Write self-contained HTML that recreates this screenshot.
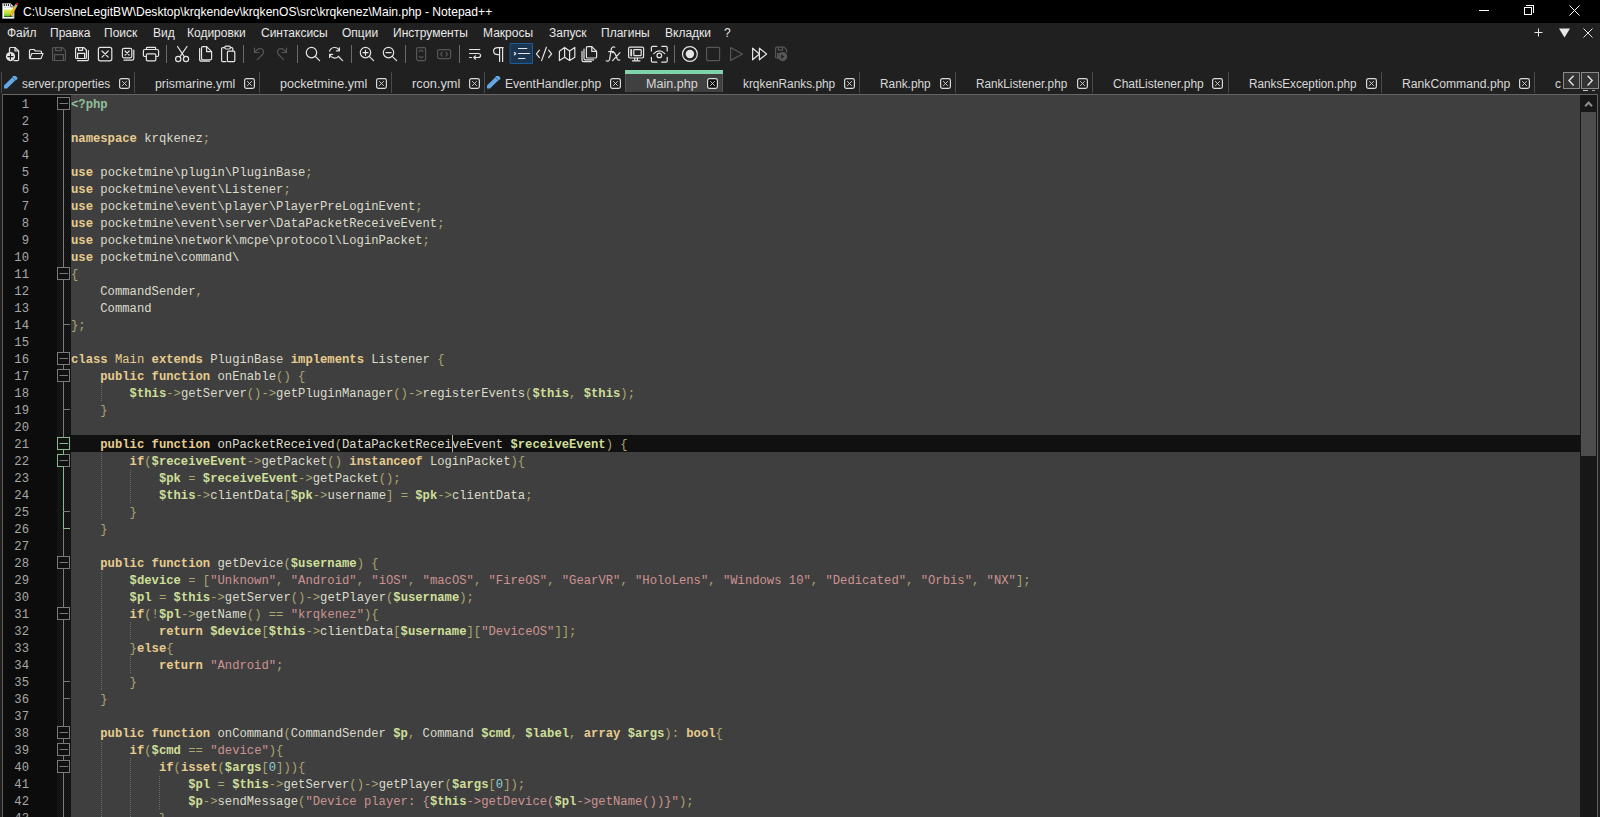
<!DOCTYPE html>
<html><head><meta charset="utf-8">
<style>
*{box-sizing:border-box}
html,body{margin:0;padding:0}
body{width:1600px;height:817px;overflow:hidden;background:#202020;position:relative;font-family:"Liberation Sans",sans-serif;color:#e0e0e0}
.abs{position:absolute}
#title{left:0;top:0;width:1600px;height:23px;background:#000}
#title .ttl{position:absolute;left:23px;top:5px;font-size:12.1px;color:#fff;white-space:pre;line-height:15px}
#menu{left:0;top:23px;width:1600px;height:19px;background:#202020}
#menu span{position:absolute;top:3px;font-size:12px;line-height:15px;color:#e8e8e8;white-space:pre}
#tool{left:0;top:42px;width:1600px;height:24px}
#tabs{left:0;top:66px;width:1600px;height:28px}
.tab{position:absolute;top:0;height:28px}
.tab .nm{position:absolute;top:9px;font-size:11.7px;line-height:15px;color:#d8d8d8;white-space:pre}
.sep{position:absolute;top:6px;width:1px;height:21px;background:#4a4a4a}
.cb{position:absolute;top:12px;width:11px;height:11px;border:1px solid #d0d0d0;border-radius:2px}
#ed{left:0;top:94px;width:1600px;height:723px;background:#1e1e1e}
#edb{position:absolute;left:2px;top:0;width:1596px;height:723px;border-top:1px solid #646464;border-left:1px solid #5e5e5e;border-right:1px solid #5e5e5e}
#lnm{position:absolute;left:3px;top:1px;width:54px;height:722px;background:#0c0c0c}
#fold{position:absolute;left:57px;top:1px;width:14px;height:722px;background:#151515}
#code{position:absolute;left:71px;top:1px;width:1509px;height:722px;background:#3f3f3f;overflow:hidden}
#code div{height:17px;line-height:17px;padding-top:2px;white-space:pre;font-family:"Liberation Mono",monospace;font-size:12.21px;color:#dcdccc;padding-left:0}
#code div.cur{background:#101010}
.k{color:#e6cc8e;font-weight:bold}
.m{color:#e6cc8e}
.v{color:#cedf99;font-weight:bold}
.o{color:#aca670}
.s{color:#cc9393}
.n{color:#8cd0d3}
.tg{color:#8fbf9a;font-weight:bold}
#nums div{position:absolute;left:-2px;margin-top:2px;width:28px;text-align:right;height:17px;line-height:17px;font-family:"Liberation Mono",monospace;font-size:12.22px;color:#a8a8a8}
#sb{position:absolute;left:1580px;top:1px;width:17px;height:722px;background:#171717}
#thumb{position:absolute;left:1px;top:17px;width:15px;height:344px;background:#4d4d4d}
#guides{position:absolute;left:0;top:0;width:0;height:0}
#guides i{position:absolute;width:1px;background-image:repeating-linear-gradient(to bottom,#5c7272 0 1px,transparent 1px 2px)}
#caret{position:absolute;left:381px;top:340px;width:1px;height:17px;background:#a8c4b4}
</style></head><body>

<div id="title" class="abs">
<svg class="abs" style="left:0;top:0" width="20" height="22" viewBox="0 0 20 22">
<defs><linearGradient id="ig" x1="0" y1="0" x2="0" y2="1"><stop offset="0" stop-color="#e8ec50"/><stop offset="0.5" stop-color="#b8e040"/><stop offset="1" stop-color="#50c020"/></linearGradient></defs>
<path d="M2.5 3.5 H10.5 L14 7 V18.5 H2.5 Z" fill="#fafafa" stroke="#9a9a9a"/>
<path d="M10.5 3.5 V7 H14" fill="#c0c0c0" stroke="#808080"/>
<rect x="4" y="9.6" width="8.6" height="7" fill="url(#ig)"/>
<rect x="4" y="16" width="8.6" height="0.8" fill="#105010"/>
<path d="M4 7.2 H10" stroke="#b8c8d8" stroke-width="0.8"/>
<path d="M4.3 4 V6 M6.4 4 V6 M8.5 4 V6" stroke="#303030" stroke-width="1.1"/>
<path d="M10.6 15.6 L15.6 6.4" stroke="#e8a000" stroke-width="2.6"/>
<path d="M10.8 15 L15.4 6.8" stroke="#ffd040" stroke-width="0.9"/>
<path d="M15.4 6.6 L16.6 4.6" stroke="#a8c0d8" stroke-width="2.4"/>
<path d="M16.4 4.8 L17.4 3" stroke="#d01818" stroke-width="2.4"/>
<path d="M10.6 15.6 L10.1 16.6" stroke="#503000" stroke-width="1.2"/>
</svg>
<div class="ttl">C:\Users\neLegitBW\Desktop\krqkendev\krqkenOS\src\krqkenez\Main.php - Notepad++</div>
<div class="abs" style="left:1479px;top:10px;width:10px;height:1px;background:#fff"></div>
<div class="abs" style="left:1526px;top:5px;width:8px;height:8px;border-top:1px solid #fff;border-right:1px solid #fff"></div>
<div class="abs" style="left:1524px;top:7px;width:8px;height:8px;border:1px solid #fff"></div>
<svg class="abs" style="left:1569px;top:5px" width="11" height="11"><path d="M0.5 0.5L10.5 10.5M10.5 0.5L0.5 10.5" stroke="#fff" stroke-width="1"/></svg>
</div>
<div id="menu" class="abs">
<span style="left:7px">Файл</span>
<span style="left:50px">Правка</span>
<span style="left:104px">Поиск</span>
<span style="left:153px">Вид</span>
<span style="left:187px">Кодировки</span>
<span style="left:261px">Синтаксисы</span>
<span style="left:342px">Опции</span>
<span style="left:393px">Инструменты</span>
<span style="left:483px">Макросы</span>
<span style="left:549px">Запуск</span>
<span style="left:601px">Плагины</span>
<span style="left:665px">Вкладки</span>
<span style="left:724px">?</span>
<svg class="abs" style="left:1534px;top:5px" width="9" height="9"><path d="M4.5 0.5V8.5M0.5 4.5H8.5" stroke="#e8e8e8"/></svg>
<svg class="abs" style="left:1559px;top:5px" width="11" height="10"><path d="M0 0.5H11L5.5 9.5Z" fill="#e8e8e8"/></svg>
<svg class="abs" style="left:1583px;top:5px" width="10" height="10"><path d="M0.5 0.5L9.5 9.5M9.5 0.5L0.5 9.5" stroke="#e8e8e8"/></svg>
</div>
<div id="tool" class="abs">
<svg class="abs" style="left:0;top:0" width="1600" height="24" viewBox="0 42 1600 24">
<g fill="none" stroke="#e4e4e4" stroke-width="1.2" stroke-linejoin="round" stroke-linecap="round">
<!-- new -->
<path d="M9.5 52 V48.5 Q9.5 47.5 10.5 47.5 H15 L18.6 51 V59.5 Q18.6 60.6 17.5 60.6 H14"/>
<path d="M15 47.5 V51 H18.6"/>
<circle cx="10.5" cy="56.6" r="4.6" fill="#e4e4e4" stroke="none"/>
<path d="M10.5 54 V59.2 M7.9 56.6 H13.1" stroke="#202020" stroke-width="1.1"/>
<!-- open -->
<path d="M29.5 58 V50.5 Q29.5 49.5 30.5 49.5 H34 L35.5 51 H40.5 Q41.5 51 41.5 52 V53"/>
<path d="M29.8 58.6 L31.8 53.5 H43 L41 58.6 Z"/>
<!-- save disabled -->
<g stroke="#565656">
<path d="M52.6 48.5 Q52.6 47.6 53.5 47.6 H62.5 L65.4 50.5 V59.6 Q65.4 60.5 64.5 60.5 H53.5 Q52.6 60.5 52.6 59.6 Z"/>
<path d="M55.6 47.6 V50.6 H61.4 V47.6"/>
<path d="M54.6 60.5 V54.6 H63.4 V60.5"/>
</g>
<!-- save all -->
<path d="M75.6 48.5 Q75.6 47.6 76.5 47.6 H84 L86.4 50 V57.6 Q86.4 58.5 85.5 58.5 H76.5 Q75.6 58.5 75.6 57.6 Z"/>
<path d="M78.5 47.6 V50.3 H82.6 V47.6"/>
<path d="M77.6 58.5 V53.4 H84.6 V58.5"/>
<path d="M88.4 50.5 V59.5 Q88.4 60.7 87.2 60.7 H77.5"/>
<!-- close -->
<rect x="98.4" y="47.4" width="13.4" height="13.4" rx="2"/>
<path d="M102 51L108.2 57.2M108.2 51L102 57.2"/>
<!-- close all -->
<rect x="122.4" y="48.4" width="9.4" height="9.4" rx="1.5"/>
<path d="M125 51L129.2 55.2M129.2 51L125 55.2"/>
<path d="M133.8 50 V58.5 Q133.8 60.2 132 60.2 H124"/>
<!-- print -->
<path d="M146.5 49.5 V48 Q146.5 47.4 147.2 47.4 H155 Q155.6 47.4 155.6 48 V49.5"/>
<path d="M146 56.5 H144.6 Q143.4 56.5 143.4 55.3 V51 Q143.4 49.5 145 49.5 H157 Q158.6 49.5 158.6 51 V55.3 Q158.6 56.5 157.4 56.5 H156"/>
<rect x="146.4" y="53.8" width="9.4" height="7" rx="1"/>
<!-- cut -->
<circle cx="178.2" cy="59" r="2.6"/>
<circle cx="186" cy="59" r="2.6"/>
<path d="M177.5 46.5 L184.5 56.8 M187 46.5 L179.8 56.8"/>
<!-- copy -->
<path d="M201.5 58.4 V48 Q201.5 46.6 203 46.6 H206.6 L211.6 51.6 V58.4 Q211.6 59.8 210.2 59.8 H203 Q201.5 59.8 201.5 58.4 Z"/>
<path d="M206.6 46.8 V51.6 H211.4"/>
<path d="M199.6 48.6 V59.2 Q199.6 61.2 201.6 61.2 H209.4"/>
<!-- paste -->
<path d="M224.5 47.6 H222.8 Q221.6 47.6 221.6 48.8 V60.6 Q221.6 61.6 222.6 61.6 H226"/>
<path d="M230.4 47.6 H231.8 Q232.8 47.6 232.8 48.6 V50.6"/>
<rect x="224.8" y="46.2" width="5.6" height="2.8" rx="1.2"/>
<rect x="227.4" y="51.2" width="7.4" height="10.4" rx="1"/>
<!-- undo/redo disabled -->
<g stroke="#565656">
<path d="M254.5 48 V52.5 H259"/>
<path d="M254.8 52.2 Q258 47.5 261.5 48.8 Q265 51 262.5 54.5 L257.4 59.6"/>
<path d="M286.5 48 V52.5 H282"/>
<path d="M286.2 52.2 Q283 47.5 279.5 48.8 Q276 51 278.5 54.5 L283.6 59.6"/>
</g>
<!-- find -->
<circle cx="311.5" cy="52.6" r="5.2"/>
<path d="M315.5 56.6 L319.6 60.7"/>
<!-- replace -->
<path d="M339.2 50.3 A5.2 5.2 0 0 0 329.6 51.2"/>
<path d="M329.8 54.8 A5.2 5.2 0 0 0 338.5 56.3"/>
<path d="M339.4 47.8 V50.8 H336.4" />
<path d="M329.6 57.4 V54.4 H332.6" />
<path d="M338.5 56.5 L342.6 60.7"/>
<!-- zoom in -->
<circle cx="365.5" cy="52.6" r="5.2"/>
<path d="M369.5 56.6 L373.6 60.7 M365.5 50 V55.2 M362.9 52.6 H368.1"/>
<!-- zoom out -->
<circle cx="388.5" cy="52.6" r="5.2"/>
<path d="M392.5 56.6 L396.6 60.7 M385.9 52.6 H391.1"/>
<!-- sync disabled -->
<g stroke="#565656">
<rect x="416.6" y="47.6" width="9" height="13" rx="1.5"/>
<path d="M419.2 51.6 L421.1 50 L423 51.6 M419.2 56.4 L421.1 58 L423 56.4"/>
<rect x="437.6" y="49.6" width="13" height="9" rx="1.5"/>
<path d="M442.2 52 L440.7 54.1 L442.2 56.2 M446 52 L447.5 54.1 L446 56.2"/>
</g>
<!-- wrap -->
<path d="M469.5 49.5 H479.8 M469.5 53.5 H478 Q480.6 53.5 480.6 55.5 Q480.6 57.5 478 57.5 H474.5 M469.5 57.5 H471.5"/>
<path d="M475.5 55.8 L473.8 57.5 L475.5 59.2"/>
<!-- pilcrow -->
<path d="M499.6 47.6 V61.5 M502.6 47.6 V61.5 M503.2 47.6 H498 Q493.6 47.6 493.6 51 Q493.6 54.6 498 54.6 H499.6"/>
<!-- indent guide active -->
<rect x="510.5" y="43.5" width="22" height="20" fill="#1b3550" stroke="#1d5c96" stroke-width="1"/>
<path d="M514.4 52.5 L515.8 53.6 L514.4 54.8"/>
<path d="M518.5 48.5 H526.8 M518.5 53.5 H529.6 M518.5 58.5 H524.8"/>
<!-- </> -->
<path d="M539.4 50.2 L536.4 53.8 L539.4 57.6 M548.6 50.2 L551.6 53.8 L548.6 57.6 M546.4 47.2 L541.6 60.6"/>
<!-- map -->
<path d="M559.4 51.2 L564.6 47.4 L569.6 51 L574.8 47.4 V57.2 L569.6 60.6 L564.6 57.2 L559.4 60.6 Z M564.6 47.4 V57.2 M569.6 51 V60.6"/>
<!-- doc list -->
<path d="M586.4 57 V47.6 Q586.4 46.6 587.4 46.6 H591.8 L596.6 51.4 V57 Q596.6 58 595.6 58 H587.4 Q586.4 58 586.4 57 Z"/>
<path d="M591.8 46.8 V51.4 H596.4"/>
<path d="M584 49 V58.4 Q584 59.8 585.4 59.8 H593.8"/>
<path d="M582 51.4 V60 Q582 61.6 583.6 61.6 H591.4"/>
<!-- fx -->
<path d="M614.8 47.2 Q612.6 46 611.4 48.6 L609.6 59.4 Q608.8 62 606.2 60.8 M608.6 51.6 H613.4"/>
<path d="M612.6 52.6 Q614 52 615 53.6 L617.4 59.2 Q618.2 60.6 619.8 60 M620 52.6 L612.6 60.6"/>
<!-- monitor -->
<rect x="628.6" y="47.2" width="15" height="10.8" rx="1.4"/>
<path d="M631.2 49.8 V55.6" stroke-width="1.8"/>
<rect x="633.8" y="49.6" width="7.4" height="6" rx="0.6"/>
<path d="M634.8 58 V60.6 M637.4 58 V60.6 M632.4 60.8 H640"/>
<!-- focus -->
<path d="M651.4 51 V47.6 Q651.4 46.4 652.6 46.4 H656.8 M661.8 46.4 H666 Q667.2 46.4 667.2 47.6 V51 M667.2 57.4 V61 Q667.2 62.2 666 62.2 H661.8 M656.8 62.2 H652.6 Q651.4 62.2 651.4 61 V57.4"/>
<path d="M653.8 53.6 Q659.3 48.2 664.8 53.6"/>
<circle cx="659.3" cy="55.4" r="2.3"/>
<!-- record -->
<circle cx="689.9" cy="54" r="7.4"/>
<circle cx="689.9" cy="54" r="4.2" fill="#e4e4e4" stroke="none"/>
<g stroke="#565656">
<rect x="706.6" y="47.4" width="13" height="13.2" rx="1"/>
<path d="M730.6 47.6 L742.6 54 L730.6 60.4 Z"/>
</g>
<path d="M752.6 48.2 L759.4 54 L752.6 59.8 Z M759.4 48.2 L766.6 54 L759.4 59.8 Z"/>
<g stroke="#565656">
<path d="M781 58 H776.6 Q775.6 58 775.6 57 V48.2 Q775.6 47.2 776.6 47.2 H784 L786.6 49.8 V52"/>
<path d="M778.4 47.2 V50.2 H782.6 V47.2 M777.6 58 V53.6 H779.6"/>
</g>
<circle cx="782.6" cy="56.6" r="4.6" fill="#565656" stroke="none"/>
<path d="M781.2 54.4 L784.4 56.6 L781.2 58.8 Z" fill="#202020" stroke="none"/>
</g>
<g fill="#6a6a6a">
<rect x="166" y="45" width="1" height="18"/>
<rect x="243" y="45" width="1" height="18"/>
<rect x="297" y="45" width="1" height="18"/>
<rect x="351" y="45" width="1" height="18"/>
<rect x="405" y="45" width="1" height="18"/>
<rect x="459" y="45" width="1" height="18"/>
<rect x="674" y="45" width="1" height="18"/>
</g>
</svg>
</div>

<div id="tabs" class="abs">
<div class="abs" style="left:625px;top:4px;width:98px;height:22px;background:#404040;border-left:1px solid #555;border-right:1px solid #555"></div>
<div class="abs" style="left:625px;top:4px;width:98px;height:4px;background:#80d4ac"></div>
<div class="sep" style="left:1px"></div>
<svg class="abs" style="left:4px;top:10px" width="14" height="14" viewBox="4 76 14 14"><path d="M4 85.6 L12.4 77.2 L15.4 80.2 L7 88.6 L4 88.6 Z" fill="#62a8e6"/><path d="M12.2 76.8 L13.8 75.4 Q14.6 74.8 15.4 75.6 L17.2 77.4 Q17.8 78.2 17.2 79 L15.8 80.4 Z" fill="#62a8e6"/></svg>
<div class="nm" style="left:22px;top:11px;position:absolute;font-size:12px;line-height:15px;color:#d8d8d8;white-space:pre"><span style="display:inline-block;transform-origin:0 0;transform:scaleX(0.9864)">server.properties</span></div>
<svg class="abs" style="left:119px;top:12px" width="11" height="11"><rect x="0.6" y="0.6" width="9.8" height="9.8" rx="1.8" fill="none" stroke="#d8d8d8" stroke-width="1.2"/><path d="M3.2 3.2L7.8 7.8M7.8 3.2L3.2 7.8" stroke="#d8d8d8" stroke-width="0.9"/></svg>
<div class="sep" style="left:134px"></div>
<div class="nm" style="left:155px;top:11px;position:absolute;font-size:12px;line-height:15px;color:#d8d8d8;white-space:pre"><span style="display:inline-block;transform-origin:0 0;transform:scaleX(1.0286)">prismarine.yml</span></div>
<svg class="abs" style="left:244px;top:12px" width="11" height="11"><rect x="0.6" y="0.6" width="9.8" height="9.8" rx="1.8" fill="none" stroke="#d8d8d8" stroke-width="1.2"/><path d="M3.2 3.2L7.8 7.8M7.8 3.2L3.2 7.8" stroke="#d8d8d8" stroke-width="0.9"/></svg>
<div class="sep" style="left:259px"></div>
<div class="nm" style="left:280px;top:11px;position:absolute;font-size:12px;line-height:15px;color:#d8d8d8;white-space:pre"><span style="display:inline-block;transform-origin:0 0;transform:scaleX(1.0462)">pocketmine.yml</span></div>
<svg class="abs" style="left:376px;top:12px" width="11" height="11"><rect x="0.6" y="0.6" width="9.8" height="9.8" rx="1.8" fill="none" stroke="#d8d8d8" stroke-width="1.2"/><path d="M3.2 3.2L7.8 7.8M7.8 3.2L3.2 7.8" stroke="#d8d8d8" stroke-width="0.9"/></svg>
<div class="sep" style="left:391px"></div>
<div class="nm" style="left:412px;top:11px;position:absolute;font-size:12px;line-height:15px;color:#d8d8d8;white-space:pre"><span style="display:inline-block;transform-origin:0 0;transform:scaleX(1.0658)">rcon.yml</span></div>
<svg class="abs" style="left:469px;top:12px" width="11" height="11"><rect x="0.6" y="0.6" width="9.8" height="9.8" rx="1.8" fill="none" stroke="#d8d8d8" stroke-width="1.2"/><path d="M3.2 3.2L7.8 7.8M7.8 3.2L3.2 7.8" stroke="#d8d8d8" stroke-width="0.9"/></svg>
<div class="sep" style="left:484px"></div>
<svg class="abs" style="left:487px;top:10px" width="14" height="14" viewBox="4 76 14 14"><path d="M4 85.6 L12.4 77.2 L15.4 80.2 L7 88.6 L4 88.6 Z" fill="#62a8e6"/><path d="M12.2 76.8 L13.8 75.4 Q14.6 74.8 15.4 75.6 L17.2 77.4 Q17.8 78.2 17.2 79 L15.8 80.4 Z" fill="#62a8e6"/></svg>
<div class="nm" style="left:505px;top:11px;position:absolute;font-size:12px;line-height:15px;color:#d8d8d8;white-space:pre"><span style="display:inline-block;transform-origin:0 0;transform:scaleX(1.0085)">EventHandler.php</span></div>
<svg class="abs" style="left:610px;top:12px" width="11" height="11"><rect x="0.6" y="0.6" width="9.8" height="9.8" rx="1.8" fill="none" stroke="#d8d8d8" stroke-width="1.2"/><path d="M3.2 3.2L7.8 7.8M7.8 3.2L3.2 7.8" stroke="#d8d8d8" stroke-width="0.9"/></svg>
<div class="nm" style="left:646px;top:11px;position:absolute;font-size:12px;line-height:15px;color:#d8d8d8;white-space:pre"><span style="display:inline-block;transform-origin:0 0;transform:scaleX(1.0456)">Main.php</span></div>
<svg class="abs" style="left:707px;top:12px" width="11" height="11"><rect x="0.6" y="0.6" width="9.8" height="9.8" rx="1.8" fill="#0c0c0c" stroke="#d8d8d8" stroke-width="1.2"/><path d="M3.2 3.2L7.8 7.8M7.8 3.2L3.2 7.8" stroke="#d8d8d8" stroke-width="0.9"/></svg>
<div class="nm" style="left:743px;top:11px;position:absolute;font-size:12px;line-height:15px;color:#d8d8d8;white-space:pre"><span style="display:inline-block;transform-origin:0 0;transform:scaleX(0.9870)">krqkenRanks.php</span></div>
<svg class="abs" style="left:844px;top:12px" width="11" height="11"><rect x="0.6" y="0.6" width="9.8" height="9.8" rx="1.8" fill="none" stroke="#d8d8d8" stroke-width="1.2"/><path d="M3.2 3.2L7.8 7.8M7.8 3.2L3.2 7.8" stroke="#d8d8d8" stroke-width="0.9"/></svg>
<div class="sep" style="left:859px"></div>
<div class="nm" style="left:880px;top:11px;position:absolute;font-size:12px;line-height:15px;color:#d8d8d8;white-space:pre"><span style="display:inline-block;transform-origin:0 0;transform:scaleX(0.9861)">Rank.php</span></div>
<svg class="abs" style="left:940px;top:12px" width="11" height="11"><rect x="0.6" y="0.6" width="9.8" height="9.8" rx="1.8" fill="none" stroke="#d8d8d8" stroke-width="1.2"/><path d="M3.2 3.2L7.8 7.8M7.8 3.2L3.2 7.8" stroke="#d8d8d8" stroke-width="0.9"/></svg>
<div class="sep" style="left:955px"></div>
<div class="nm" style="left:976px;top:11px;position:absolute;font-size:12px;line-height:15px;color:#d8d8d8;white-space:pre"><span style="display:inline-block;transform-origin:0 0;transform:scaleX(0.9761)">RankListener.php</span></div>
<svg class="abs" style="left:1077px;top:12px" width="11" height="11"><rect x="0.6" y="0.6" width="9.8" height="9.8" rx="1.8" fill="none" stroke="#d8d8d8" stroke-width="1.2"/><path d="M3.2 3.2L7.8 7.8M7.8 3.2L3.2 7.8" stroke="#d8d8d8" stroke-width="0.9"/></svg>
<div class="sep" style="left:1092px"></div>
<div class="nm" style="left:1113px;top:11px;position:absolute;font-size:12px;line-height:15px;color:#d8d8d8;white-space:pre"><span style="display:inline-block;transform-origin:0 0;transform:scaleX(1.0000)">ChatListener.php</span></div>
<svg class="abs" style="left:1212px;top:12px" width="11" height="11"><rect x="0.6" y="0.6" width="9.8" height="9.8" rx="1.8" fill="none" stroke="#d8d8d8" stroke-width="1.2"/><path d="M3.2 3.2L7.8 7.8M7.8 3.2L3.2 7.8" stroke="#d8d8d8" stroke-width="0.9"/></svg>
<div class="sep" style="left:1228px"></div>
<div class="nm" style="left:1249px;top:11px;position:absolute;font-size:12px;line-height:15px;color:#d8d8d8;white-space:pre"><span style="display:inline-block;transform-origin:0 0;transform:scaleX(0.9780)">RanksException.php</span></div>
<svg class="abs" style="left:1366px;top:12px" width="11" height="11"><rect x="0.6" y="0.6" width="9.8" height="9.8" rx="1.8" fill="none" stroke="#d8d8d8" stroke-width="1.2"/><path d="M3.2 3.2L7.8 7.8M7.8 3.2L3.2 7.8" stroke="#d8d8d8" stroke-width="0.9"/></svg>
<div class="sep" style="left:1381px"></div>
<div class="nm" style="left:1402px;top:11px;position:absolute;font-size:12px;line-height:15px;color:#d8d8d8;white-space:pre"><span style="display:inline-block;transform-origin:0 0;transform:scaleX(1.0142)">RankCommand.php</span></div>
<svg class="abs" style="left:1519px;top:12px" width="11" height="11"><rect x="0.6" y="0.6" width="9.8" height="9.8" rx="1.8" fill="none" stroke="#d8d8d8" stroke-width="1.2"/><path d="M3.2 3.2L7.8 7.8M7.8 3.2L3.2 7.8" stroke="#d8d8d8" stroke-width="0.9"/></svg>
<div class="sep" style="left:1534px"></div>
<div class="nm" style="left:1555px;top:11px;position:absolute;font-size:12px;line-height:15px;color:#d8d8d8;white-space:pre">c</div>
<div class="abs" style="left:1563px;top:6px;width:17px;height:17px;background:#333;border:1px solid #8a8a8a"></div>
<div class="abs" style="left:1581px;top:6px;width:18px;height:17px;background:#333;border:1px solid #8a8a8a"></div>
<svg class="abs" style="left:1563px;top:6px" width="17" height="17"><path d="M10.6 3.8L6 8.6L10.6 13.4" fill="none" stroke="#e4e4e4" stroke-width="1.4"/></svg>
<svg class="abs" style="left:1581px;top:6px" width="18" height="17"><path d="M6.6 3.8L11.2 8.6L6.6 13.4" fill="none" stroke="#e4e4e4" stroke-width="1.4"/></svg><div class="abs" style="left:1583px;top:24px;width:5px;height:1px;background:#c8c8c8"></div><div class="abs" style="left:1592px;top:24px;width:3px;height:1px;background:#a0a0a0"></div>
</div>
<div id="ed" class="abs"><div id="edb"></div>
<div id="lnm"><div id="nums">
<div style="top:0px">1</div>
<div style="top:17px">2</div>
<div style="top:34px">3</div>
<div style="top:51px">4</div>
<div style="top:68px">5</div>
<div style="top:85px">6</div>
<div style="top:102px">7</div>
<div style="top:119px">8</div>
<div style="top:136px">9</div>
<div style="top:153px">10</div>
<div style="top:170px">11</div>
<div style="top:187px">12</div>
<div style="top:204px">13</div>
<div style="top:221px">14</div>
<div style="top:238px">15</div>
<div style="top:255px">16</div>
<div style="top:272px">17</div>
<div style="top:289px">18</div>
<div style="top:306px">19</div>
<div style="top:323px">20</div>
<div style="top:340px">21</div>
<div style="top:357px">22</div>
<div style="top:374px">23</div>
<div style="top:391px">24</div>
<div style="top:408px">25</div>
<div style="top:425px">26</div>
<div style="top:442px">27</div>
<div style="top:459px">28</div>
<div style="top:476px">29</div>
<div style="top:493px">30</div>
<div style="top:510px">31</div>
<div style="top:527px">32</div>
<div style="top:544px">33</div>
<div style="top:561px">34</div>
<div style="top:578px">35</div>
<div style="top:595px">36</div>
<div style="top:612px">37</div>
<div style="top:629px">38</div>
<div style="top:646px">39</div>
<div style="top:663px">40</div>
<div style="top:680px">41</div>
<div style="top:697px">42</div>
<div style="top:714px">43</div>
</div></div>
<svg class="abs" style="left:57px;top:1px" width="14" height="722" viewBox="57 95 14 722">
<defs><pattern id="chk" width="2" height="2" patternUnits="userSpaceOnUse" x="57" y="95"><rect width="2" height="2" fill="#0f0f0f"/><rect width="1" height="1" fill="#191919"/><rect x="1" y="1" width="1" height="1" fill="#191919"/></pattern></defs>
<rect x="57" y="95" width="14" height="722" fill="url(#chk)"/>
<path d="M63.5 109 V817" stroke="#7a7a7a" stroke-width="1"/>
<path d="M63.5 449 V529" stroke="#86bc92" stroke-width="1"/>
<path d="M63 324.5 H70" stroke="#7a7a7a" stroke-width="1"/>
<path d="M63 409.5 H70" stroke="#7a7a7a" stroke-width="1"/>
<path d="M63 511.5 H70" stroke="#7a7a7a" stroke-width="1"/>
<path d="M63 681.5 H70" stroke="#7a7a7a" stroke-width="1"/>
<path d="M63 698.5 H70" stroke="#7a7a7a" stroke-width="1"/>
<path d="M63 528.5 H70" stroke="#86bc92" stroke-width="1"/>
<rect x="57.5" y="97.5" width="12" height="12" fill="#101010" stroke="#7a7a7a" stroke-width="1"/>
<path d="M59.5 103.5 H68" stroke="#7a7a7a" stroke-width="1"/>
<rect x="57.5" y="267.5" width="12" height="12" fill="#101010" stroke="#7a7a7a" stroke-width="1"/>
<path d="M59.5 273.5 H68" stroke="#7a7a7a" stroke-width="1"/>
<rect x="57.5" y="352.5" width="12" height="12" fill="#101010" stroke="#7a7a7a" stroke-width="1"/>
<path d="M59.5 358.5 H68" stroke="#7a7a7a" stroke-width="1"/>
<rect x="57.5" y="369.5" width="12" height="12" fill="#101010" stroke="#7a7a7a" stroke-width="1"/>
<path d="M59.5 375.5 H68" stroke="#7a7a7a" stroke-width="1"/>
<rect x="57.5" y="556.5" width="12" height="12" fill="#101010" stroke="#7a7a7a" stroke-width="1"/>
<path d="M59.5 562.5 H68" stroke="#7a7a7a" stroke-width="1"/>
<rect x="57.5" y="607.5" width="12" height="12" fill="#101010" stroke="#7a7a7a" stroke-width="1"/>
<path d="M59.5 613.5 H68" stroke="#7a7a7a" stroke-width="1"/>
<rect x="57.5" y="726.5" width="12" height="12" fill="#101010" stroke="#7a7a7a" stroke-width="1"/>
<path d="M59.5 732.5 H68" stroke="#7a7a7a" stroke-width="1"/>
<rect x="57.5" y="743.5" width="12" height="12" fill="#101010" stroke="#7a7a7a" stroke-width="1"/>
<path d="M59.5 749.5 H68" stroke="#7a7a7a" stroke-width="1"/>
<rect x="57.5" y="760.5" width="12" height="12" fill="#101010" stroke="#7a7a7a" stroke-width="1"/>
<path d="M59.5 766.5 H68" stroke="#7a7a7a" stroke-width="1"/>
<rect x="57.5" y="437.5" width="12" height="12" fill="#101010" stroke="#86bc92" stroke-width="1"/>
<path d="M59.5 443.5 H68" stroke="#86bc92" stroke-width="1"/>
<rect x="57.5" y="454.5" width="12" height="12" fill="#101010" stroke="#7a7a7a" stroke-width="1"/>
<path d="M59.5 460.5 H68" stroke="#7a7a7a" stroke-width="1"/>
<path d="M57.5 454 V467 M57 466.5 H63.5 M57 454.5 H63.5" stroke="#86bc92" stroke-width="1"/>
<path d="M63.5 466 V469" stroke="#86bc92" stroke-width="1"/>
</svg>
<div id="code"><div id="guides"><i style="left:30px;top:289px;height:17px;background-position:0 0px"></i>
<i style="left:30px;top:357px;height:68px;background-position:0 0px"></i>
<i style="left:30px;top:476px;height:119px;background-position:0 -1px"></i>
<i style="left:30px;top:646px;height:85px;background-position:0 -1px"></i>
<i style="left:59px;top:374px;height:34px;background-position:0 -1px"></i>
<i style="left:59px;top:527px;height:17px;background-position:0 0px"></i>
<i style="left:59px;top:561px;height:17px;background-position:0 0px"></i>
<i style="left:59px;top:663px;height:68px;background-position:0 0px"></i>
<i style="left:88px;top:680px;height:34px;background-position:0 -1px"></i></div><div><span class=tg>&lt;?php</span></div>
<div>&#8203;</div>
<div><span class=k>namespace</span> krqkenez<span class=o>;</span></div>
<div>&#8203;</div>
<div><span class=k>use</span> pocketmine\plugin\PluginBase<span class=o>;</span></div>
<div><span class=k>use</span> pocketmine\event\Listener<span class=o>;</span></div>
<div><span class=k>use</span> pocketmine\event\player\PlayerPreLoginEvent<span class=o>;</span></div>
<div><span class=k>use</span> pocketmine\event\server\DataPacketReceiveEvent<span class=o>;</span></div>
<div><span class=k>use</span> pocketmine\network\mcpe\protocol\LoginPacket<span class=o>;</span></div>
<div><span class=k>use</span> pocketmine\command\</div>
<div><span class=o>{</span></div>
<div>    CommandSender<span class=o>,</span></div>
<div>    Command</div>
<div><span class=o>};</span></div>
<div>&#8203;</div>
<div><span class=k>class</span> <span class=m>Main</span> <span class=k>extends</span> PluginBase <span class=k>implements</span> Listener <span class=o>{</span></div>
<div>    <span class=k>public</span> <span class=k>function</span> onEnable<span class=o>()</span> <span class=o>{</span></div>
<div>        <span class=v>$this</span><span class=o>-&gt;</span>getServer<span class=o>()-&gt;</span>getPluginManager<span class=o>()-&gt;</span>registerEvents<span class=o>(</span><span class=v>$this</span><span class=o>,</span> <span class=v>$this</span><span class=o>);</span></div>
<div>    <span class=o>}</span></div>
<div>&#8203;</div>
<div class=cur>    <span class=k>public</span> <span class=k>function</span> onPacketReceived<span class=o>(</span>DataPacketReceiveEvent <span class=v>$receiveEvent</span><span class=o>)</span> <span class=o>{</span></div>
<div>        <span class=k>if</span><span class=o>(</span><span class=v>$receiveEvent</span><span class=o>-&gt;</span>getPacket<span class=o>()</span> <span class=k>instanceof</span> LoginPacket<span class=o>){</span></div>
<div>            <span class=v>$pk</span> <span class=o>=</span> <span class=v>$receiveEvent</span><span class=o>-&gt;</span>getPacket<span class=o>();</span></div>
<div>            <span class=v>$this</span><span class=o>-&gt;</span>clientData<span class=o>[</span><span class=v>$pk</span><span class=o>-&gt;</span>username<span class=o>]</span> <span class=o>=</span> <span class=v>$pk</span><span class=o>-&gt;</span>clientData<span class=o>;</span></div>
<div>        <span class=o>}</span></div>
<div>    <span class=o>}</span></div>
<div>&#8203;</div>
<div>    <span class=k>public</span> <span class=k>function</span> getDevice<span class=o>(</span><span class=v>$username</span><span class=o>)</span> <span class=o>{</span></div>
<div>        <span class=v>$device</span> <span class=o>=</span> <span class=o>[</span><span class=s>"Unknown"</span><span class=o>,</span> <span class=s>"Android"</span><span class=o>,</span> <span class=s>"iOS"</span><span class=o>,</span> <span class=s>"macOS"</span><span class=o>,</span> <span class=s>"FireOS"</span><span class=o>,</span> <span class=s>"GearVR"</span><span class=o>,</span> <span class=s>"HoloLens"</span><span class=o>,</span> <span class=s>"Windows 10"</span><span class=o>,</span> <span class=s>"Dedicated"</span><span class=o>,</span> <span class=s>"Orbis"</span><span class=o>,</span> <span class=s>"NX"</span><span class=o>];</span></div>
<div>        <span class=v>$pl</span> <span class=o>=</span> <span class=v>$this</span><span class=o>-&gt;</span>getServer<span class=o>()-&gt;</span>getPlayer<span class=o>(</span><span class=v>$username</span><span class=o>);</span></div>
<div>        <span class=k>if</span><span class=o>(!</span><span class=v>$pl</span><span class=o>-&gt;</span>getName<span class=o>()</span> <span class=o>==</span> <span class=s>"krqkenez"</span><span class=o>){</span></div>
<div>            <span class=k>return</span> <span class=v>$device</span><span class=o>[</span><span class=v>$this</span><span class=o>-&gt;</span>clientData<span class=o>[</span><span class=v>$username</span><span class=o>][</span><span class=s>"DeviceOS"</span><span class=o>]];</span></div>
<div>        <span class=o>}</span><span class=k>else</span><span class=o>{</span></div>
<div>            <span class=k>return</span> <span class=s>"Android"</span><span class=o>;</span></div>
<div>        <span class=o>}</span></div>
<div>    <span class=o>}</span></div>
<div>&#8203;</div>
<div>    <span class=k>public</span> <span class=k>function</span> onCommand<span class=o>(</span>CommandSender <span class=v>$p</span><span class=o>,</span> Command <span class=v>$cmd</span><span class=o>,</span> <span class=v>$label</span><span class=o>,</span> <span class=k>array</span> <span class=v>$args</span><span class=o>):</span> <span class=k>bool</span><span class=o>{</span></div>
<div>        <span class=k>if</span><span class=o>(</span><span class=v>$cmd</span> <span class=o>==</span> <span class=s>"device"</span><span class=o>){</span></div>
<div>            <span class=k>if</span><span class=o>(</span><span class=k>isset</span><span class=o>(</span><span class=v>$args</span><span class=o>[</span><span class=n>0</span><span class=o>])){</span></div>
<div>                <span class=v>$pl</span> <span class=o>=</span> <span class=v>$this</span><span class=o>-&gt;</span>getServer<span class=o>()-&gt;</span>getPlayer<span class=o>(</span><span class=v>$args</span><span class=o>[</span><span class=n>0</span><span class=o>]);</span></div>
<div>                <span class=v>$p</span><span class=o>-&gt;</span>sendMessage<span class=o>(</span><span class=s>"Device player: {</span><span class=v>$this</span><span class=s>-&gt;getDevice(</span><span class=v>$pl</span><span class=s>-&gt;getName())}"</span><span class=o>);</span></div>
<div>            <span class=o>}</span></div><b id="caret"></b></div>
<div id="sb"><svg class="abs" style="left:0;top:0" width="17" height="17"><path d="M5.2 11.2L8.6 7.6L12 11.2" fill="none" stroke="#8a8a8a" stroke-width="2.2"/></svg><div id="thumb"></div></div>
</div>
</body></html>
